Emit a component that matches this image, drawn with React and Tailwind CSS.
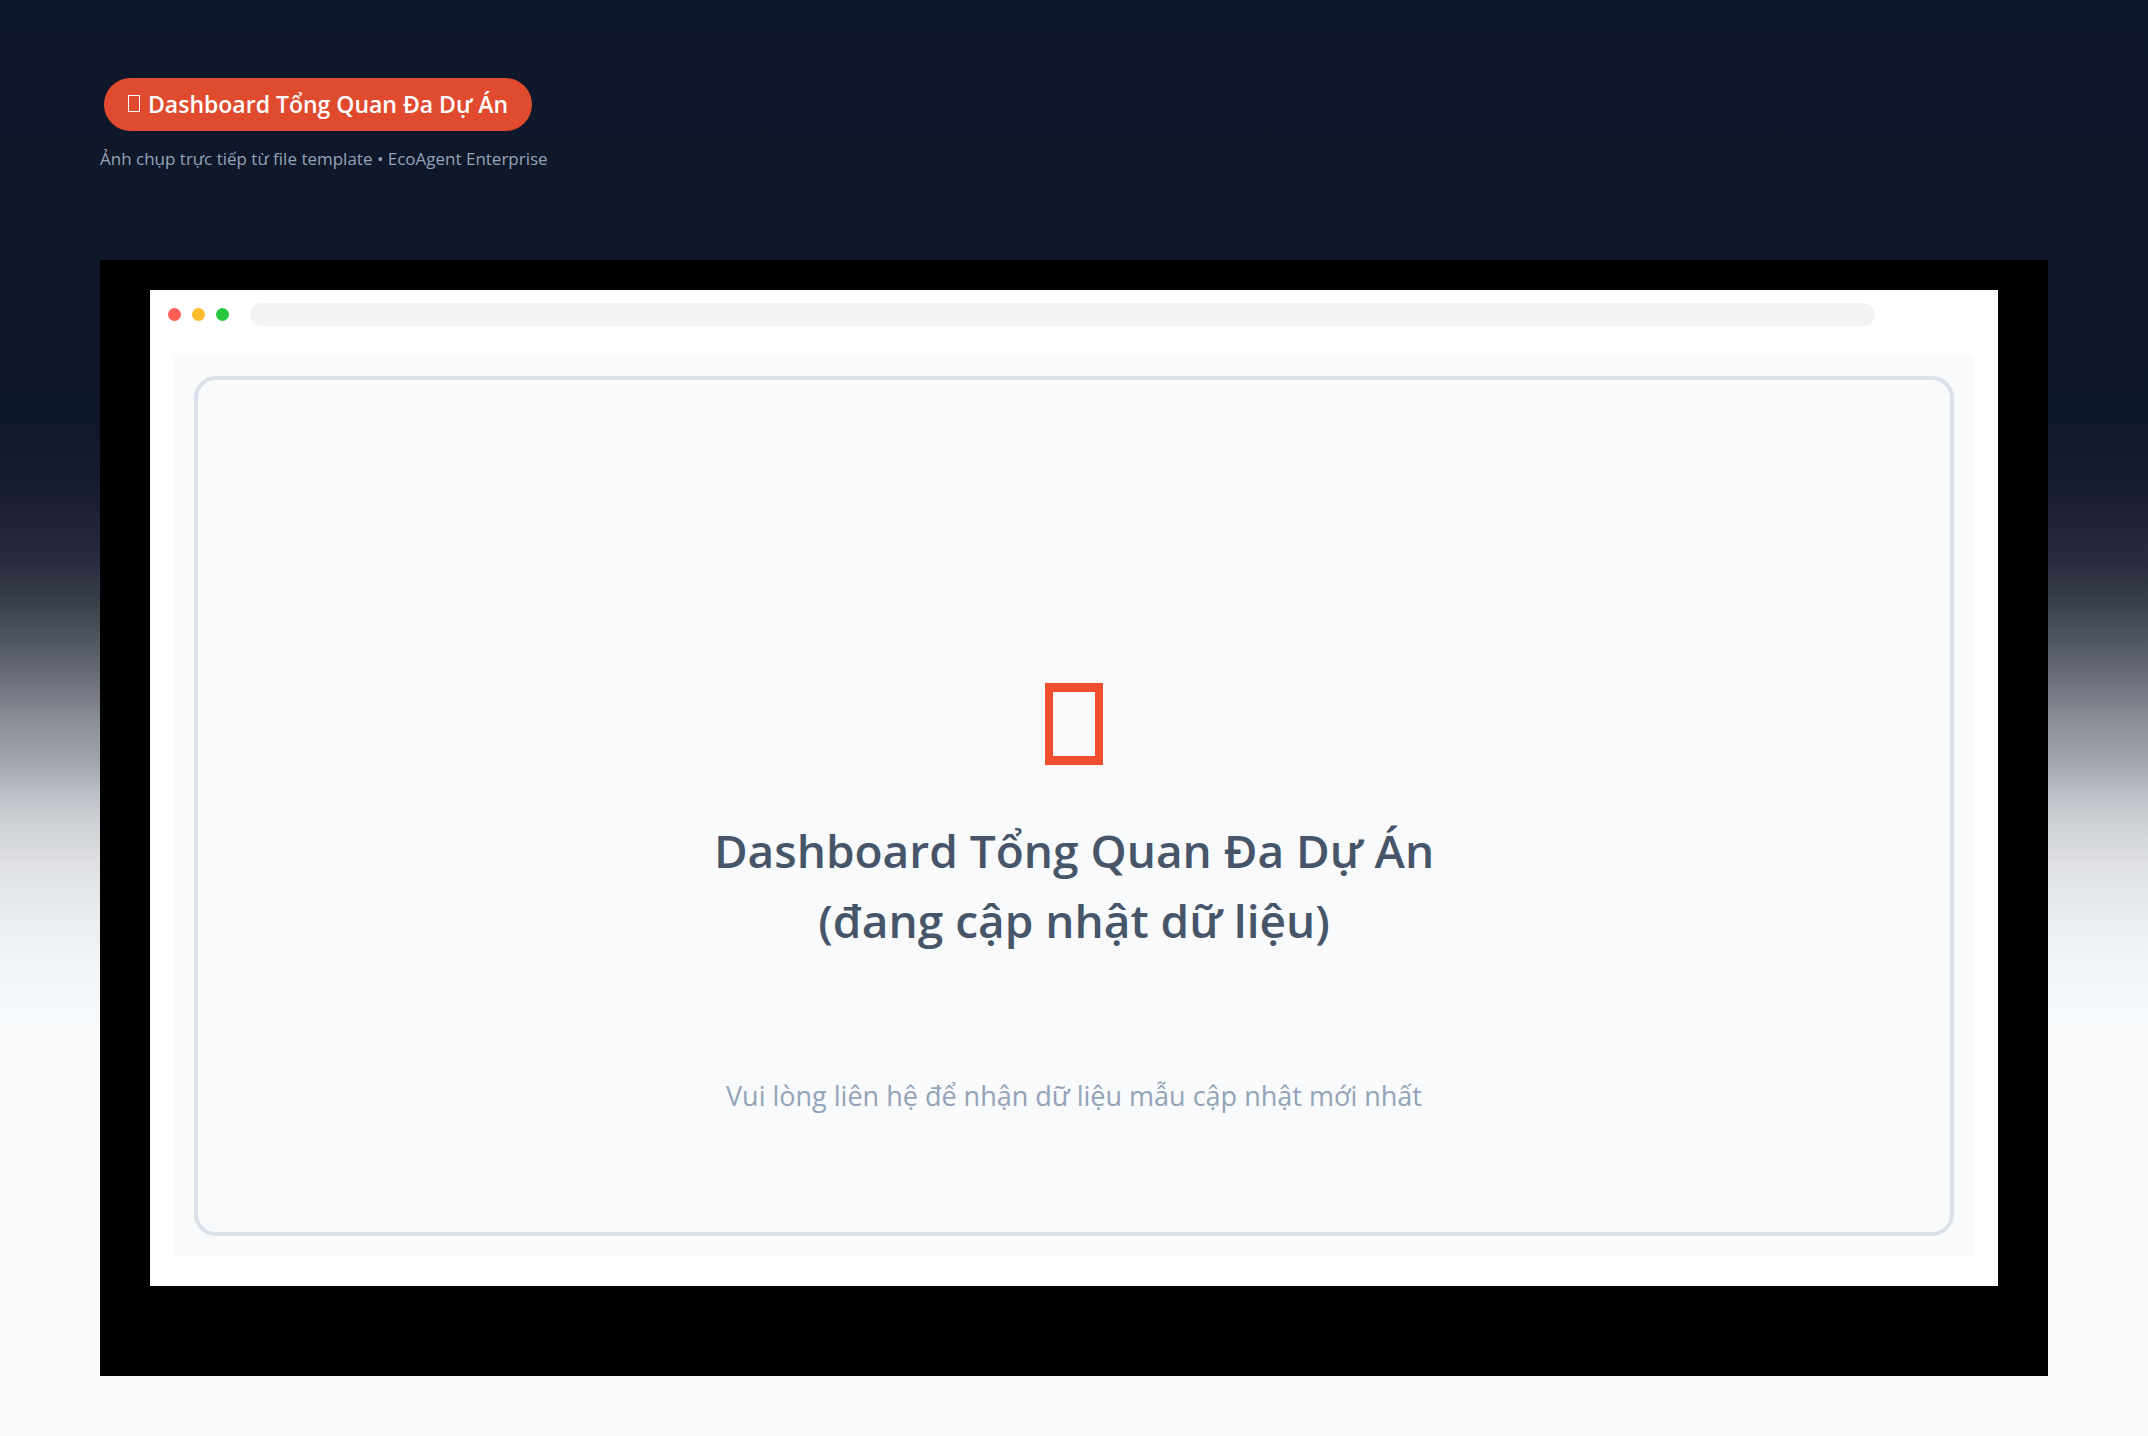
import { clsx } from 'clsx';

const TITLE = 'Dashboard Tổng Quan Đa Dự Án';

const windowDots = [
  { name: 'close', color: 'bg-[#ff5f57]' },
  { name: 'minimize', color: 'bg-[#ffbd2e]' },
  { name: 'zoom', color: 'bg-[#28c840]' },
];

export default function App() {
  return (
    <div className="flex min-h-screen flex-col bg-[linear-gradient(to_bottom,#0f172a_0%,#0f1829_29%,#121a2b_32%,#1b1f30_35%,#272b3c_39%,#3a3f4c_42%,#545a66_45%,#737682_48%,#898d96_50%,#a0a5ab_53%,#b8bcc4_55%,#cccfd3_57%,#dee0e3_60%,#eaedf0_64%,#f2f5f8_67%,#f8fafc_72%,#f8fafc_100%)] px-[100px] pt-[78px] pb-[60px] font-['Open_Sans','Noto_Sans',sans-serif]">
      <Header />
      <main className="flex flex-1 flex-col bg-black px-[50px] pt-[30px] pb-[90px]">
        <BrowserWindow>
          <Placeholder />
        </BrowserWindow>
      </main>
    </div>
  );
}

function Header() {
  return (
    <header className="flex h-[182px] flex-col items-start">
      <h1 className="ml-1 flex h-[53px] items-center gap-2 rounded-full bg-[#e04a2f] px-6 pb-0.5 text-[23px] leading-8 font-semibold whitespace-nowrap text-white">
        <MissingIcon className="h-[17px] w-3 border" />
        {TITLE}
      </h1>
      <p className="mt-4 text-[17px] leading-6 whitespace-nowrap text-[#94a3b8]">
        Ảnh chụp trực tiếp từ file template • EcoAgent Enterprise
      </p>
    </header>
  );
}

function BrowserWindow({ children }) {
  return (
    <section className="flex flex-1 flex-col bg-white pt-[13px] pb-[30px]">
      {/* Title bar */}
      <div className="flex items-center pr-[123px] pl-[18px]">
        <div className="flex gap-[11px]">
          {windowDots.map(dot => (
            <span key={dot.name} className={clsx('size-[13px] rounded-full', dot.color)} />
          ))}
        </div>
        <input
          type="text"
          readOnly
          aria-label="Address"
          className="ml-[21px] h-[23px] min-w-0 flex-1 rounded-full bg-[#f1f3f5] px-4 outline-none"
        />
      </div>

      {/* Page content */}
      <div className="mx-6 mt-[30px] flex flex-1 flex-col bg-[#f8fafc] p-5">{children}</div>
    </section>
  );
}

function Placeholder() {
  return (
    <div className="flex flex-1 flex-col items-center justify-end rounded-[22px] border-4 border-[#dbe1ea] pb-[116px] text-center">
      <MissingIcon className="h-[82px] w-[58px] border-x-8 border-y-9 text-[#f04e2e]" />
      <h2 className="mt-[50px] text-[46px] leading-[70px] font-semibold text-[#475569]">
        {TITLE}
        <br />
        (đang cập nhật dữ liệu)
      </h2>
      <p className="mt-[121px] text-[27px] leading-10 text-[#94a3b8]">
        Vui lòng liên hệ để nhận dữ liệu mẫu cập nhật mới nhất
      </p>
    </div>
  );
}

// Hollow box shown where the icon glyph is not available
function MissingIcon({ className }) {
  return <span aria-hidden="true" className={clsx('block shrink-0 border-current', className)} />;
}
